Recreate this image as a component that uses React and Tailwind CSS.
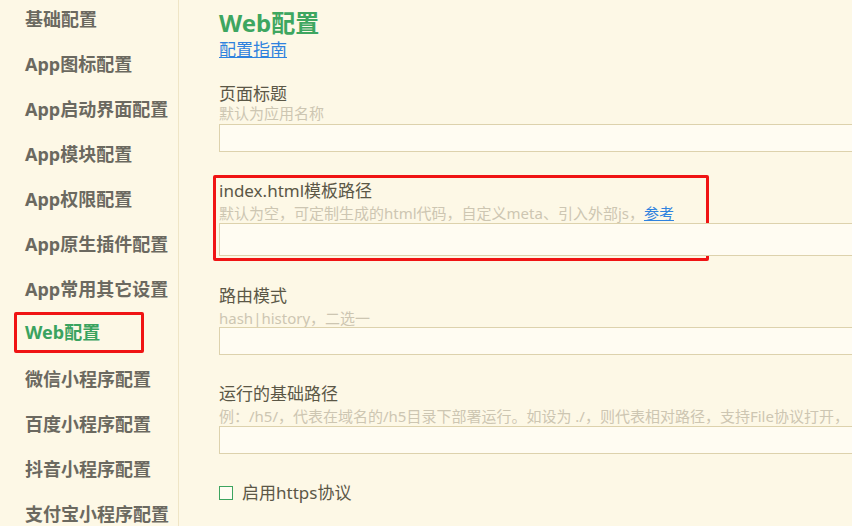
import React from "react";

const items = [
  "基础配置",
  "App图标配置",
  "App启动界面配置",
  "App模块配置",
  "App权限配置",
  "App原生插件配置",
  "App常用其它设置",
  "Web配置",
  "微信小程序配置",
  "百度小程序配置",
  "抖音小程序配置",
  "支付宝小程序配置",
];

const FONT = { fontFamily: '"Noto Sans", "Noto Sans CJK SC", sans-serif' };

const labelCls = "text-[17px] leading-[20px] text-[#5b5746] whitespace-nowrap";
const hintCls = "text-[15px] leading-[17px] text-[#cdc6b2] whitespace-nowrap";
const inputCls = "w-[700px] border border-[#ddd2ad] bg-[#fffcf2]";

export default function App() {
  return (
    <div className="w-[852px] h-[526px] overflow-hidden bg-[#fdf8e6] flex" style={FONT}>
      <div className="w-[179px] shrink-0 border-r border-[#efe5c6] flex flex-col -mt-[3px]">
        {items.map((t) =>
          t === "Web配置" ? (
            <div key={t} className="h-[45px] shrink-0">
              <div className="ml-[14px] w-[130px] h-[41px] border-[3px] border-[#f01414] rounded-[2px] flex items-center pl-[8px] text-[18px] font-bold text-[#3aa35f] whitespace-nowrap">
                {t}
              </div>
            </div>
          ) : (
            <div
              key={t}
              className="h-[45px] shrink-0 flex items-center pl-[25px] text-[18px] font-bold text-[#6b6960] whitespace-nowrap"
            >
              {t}
            </div>
          )
        )}
      </div>
      <div className="flex-1 pl-[40px] flex flex-col overflow-hidden">
        <div className="mt-[8px] text-[24px] leading-[30px] font-bold text-[#3ea660]">Web配置</div>
        <div className="mt-[2px] text-[17px] leading-[20px] text-[#2f82de] underline">配置指南</div>

        <div className="mt-[24px] flex flex-col">
          <div className={labelCls}>页面标题</div>
          <div className={`mt-[1px] ${hintCls}`}>默认为应用名称</div>
          <div className={`mt-[2px] h-[28px] ${inputCls}`} />
        </div>

        <div className="mt-[23px] -ml-[6px] w-[496px] h-[86px] border-[3px] border-[#f01414] rounded-[2px] pl-[3px] pt-[3px] flex flex-col">
          <div className={labelCls}>index.html模板路径</div>
          <div className={`mt-[4px] ${hintCls}`}>
            默认为空，可定制生成的html代码，自定义meta、引入外部js，
            <span className="text-[#2f82de] underline">参考</span>
          </div>
          <div className={`mt-[1px] h-[33px] ${inputCls}`} />
        </div>

        <div className="mt-[25px] flex flex-col">
          <div className={labelCls}>路由模式</div>
          <div className={`mt-[4px] ${hintCls}`}>hash|history，二选一</div>
          <div className={`h-[28px] ${inputCls}`} />
        </div>

        <div className="mt-[29px] flex flex-col">
          <div className={labelCls}>运行的基础路径</div>
          <div className={`mt-[4px] ${hintCls}`}>
            例：/h5/，代表在域名的/h5目录下部署运行。如设为 ./，则代表相对路径，支持File协议打开，
          </div>
          <div className={`mt-[1px] h-[28px] ${inputCls}`} />
        </div>

        <div className="mt-[29px] flex items-center">
          <div className="w-[14px] h-[14px] border border-[#3da45f] bg-[#fffcf2]" />
          <span className="ml-[9px] text-[17px] leading-[20px] text-[#5b5746]">启用https协议</span>
        </div>
      </div>
    </div>
  );
}
